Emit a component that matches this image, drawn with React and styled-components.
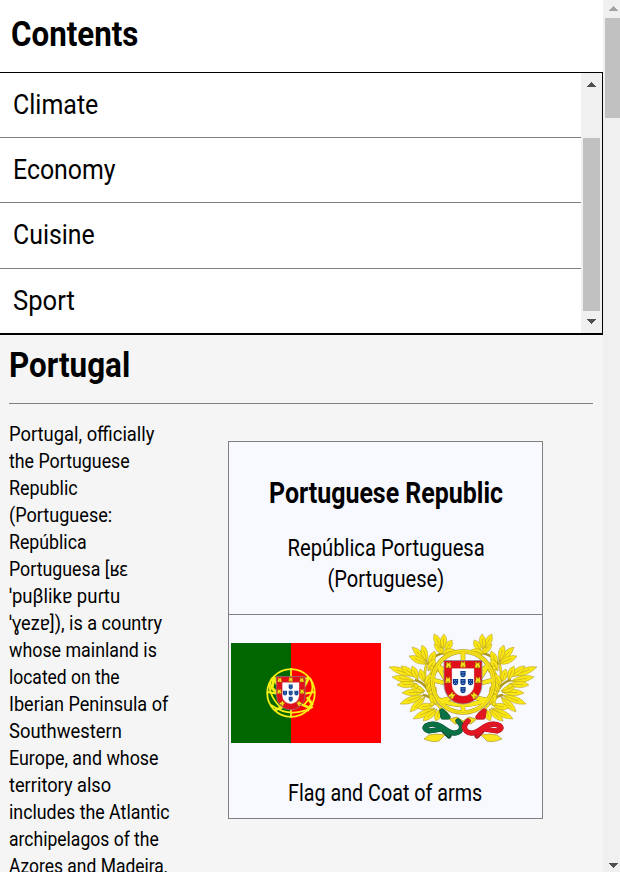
import React, { useLayoutEffect, useRef, useState } from 'react';
import styled, { createGlobalStyle } from 'styled-components';

const GlobalStyle = createGlobalStyle`
  * { box-sizing: border-box; }
  html, body { margin: 0; padding: 0; overflow: hidden; }
  body {
    background: #f5f5f5;
    color: #000;
    font-family: Roboto, "Noto Sans", "DejaVu Sans", sans-serif;
  }
  h1, h2, p, ul { margin: 0; padding: 0; }
`;

const Page = styled.div`
  display: flex;
  width: 620px;
  height: 872px;
  overflow: hidden;
`;

const Column = styled.div`
  display: flex;
  flex-direction: column;
  width: 603px;
  flex: none;
`;

const Heading = styled.h1`
  font-size: 35px;
  line-height: 44px;
  font-weight: 700;
  white-space: nowrap;
`;

const ContentsHeader = styled.header`
  height: 72px;
  flex: none;
  padding: 13px 0 0 11px;
  background: #fff;
`;

const ContentsBox = styled.nav`
  display: flex;
  height: 263px;
  flex: none;
  border: 1px solid #000;
  border-left: 0;
  border-bottom-width: 2px;
  background: #fff;
`;

const ContentsList = styled.ul`
  flex: 1;
  list-style: none;
`;

const ContentsItem = styled.li`
  height: ${(p) => p.$height}px;
  padding: 0 0 0 13px;
  border-bottom: ${(p) => (p.$last ? '0' : '1px solid #808080')};
  font-size: 28.5px;
  line-height: 63px;
  white-space: nowrap;
`;

const Track = styled.div`
  display: flex;
  flex-direction: column;
  flex: none;
  width: ${(p) => p.$width}px;
  padding: ${(p) => p.$pad};
  background: #f0f0f0;
`;

const Thumb = styled.div`
  height: ${(p) => p.$height}px;
  margin-top: ${(p) => p.$gap}px;
  margin-bottom: ${(p) => p.$after}px;
  margin-right: ${(p) => p.$inset}px;
  flex: none;
  background: #c1c1c1;
`;

const Arrow = styled.svg`
  display: block;
  flex: none;
  width: 9px;
  height: 5px;
  margin-left: 4px;
  fill: ${(p) => p.$color};
`;

const Article = styled.main`
  flex: 1;
  min-height: 0;
  padding: 9px 10px 0 9px;
`;

const TitleBar = styled.div`
  height: 60px;
  border-bottom: 1px solid #808080;
`;

const Body = styled.div`
  display: flex;
  align-items: flex-start;
  padding-top: 17px;
`;

const Intro = styled.p`
  width: 219px;
  flex: none;
  font-size: 20px;
  line-height: 27px;
`;

const Line = styled.span`
  display: block;
  height: 27px;
  white-space: nowrap;
`;

const Card = styled.aside`
  width: 315px;
  height: 378px;
  margin-top: 20px;
  flex: none;
  border: 1px solid #808080;
  background: #f8f8ff;
  text-align: center;
`;

const CardHead = styled.div`
  height: 173px;
  padding-top: 32px;
  padding-left: 1px;
  border-bottom: 1px solid #808080;
`;

const CardTitle = styled.h2`
  font-size: 29px;
  line-height: 38px;
  font-weight: 700;
`;

const CardText = styled.p`
  font-size: 24px;
  line-height: 31px;
  margin-top: ${(p) => p.$gap || 0}px;
`;

const Emblems = styled.div`
  display: flex;
  align-items: flex-start;
  padding: 17px 0 0 2px;
  gap: 7px;
`;

const Flag = styled.svg`
  display: block;
  width: 150px;
  height: 100px;
  margin-top: 11px;
`;

const Arms = styled.svg`
  display: block;
  width: 150px;
  height: 112px;
`;

const Fitted = styled.span`
  display: inline-block;
  white-space: nowrap;
  transform-origin: ${(p) => (p.$center ? 'center' : 'left')} center;
`;

/* Condenses its text horizontally to the given width. */
function Fit({ width, center, children }) {
  const ref = useRef(null);
  const [scale, setScale] = useState(1);
  useLayoutEffect(() => {
    setScale(width / ref.current.offsetWidth);
  }, [width]);
  return (
    <Fitted ref={ref} $center={center} style={{ transform: `scaleX(${scale})` }}>
      {children}
    </Fitted>
  );
}

function Up({ color }) {
  return (
    <Arrow $color={color} viewBox="0 0 9 5" shapeRendering="crispEdges">
      <path d="M4 0h1v1h1v1h1v1h1v1h1v1H0V4h1V3h1V2h1V1h1z" />
    </Arrow>
  );
}

function Down({ color }) {
  return (
    <Arrow $color={color} viewBox="0 0 9 5" shapeRendering="crispEdges">
      <path d="M0 0h9v1H8v1H7v1H6v1H5v1H4V4H3V3H2V2H1V1H0z" />
    </Arrow>
  );
}

const QUINAS = [[0, -8], [-7.5, 0], [0, 0], [7.5, 0], [0, 8]];
const CASTLES = [[-14.5, -17], [0, -17.6], [14.5, -17], [-15, -2], [15, -2], [-11, 13.5], [11, 13.5]];

/* Shield centred on the origin, about 38 by 44 units. */
function Shield() {
  return (
    <g>
      <path d="M-19-21.5H19V2.5a19 19.5 0 0 1-38 0z" fill="#e0101a" stroke="#8d8b9a" strokeWidth=".8" />
      <path d="M-11-13.5H11V3a11 11 0 0 1-22 0z" fill="#fff" stroke="#d5b5bd" strokeWidth=".5" />
      {QUINAS.map(([x, y]) => (
        <g key={`${x},${y}`} transform={`translate(${x} ${y})`}>
          <path d="M-2.6-3H2.6V.5a2.6 2.8 0 0 1-5.2 0z" fill="#063b91" />
          <path d="M-1.3-1.6h.8m1 0h.8M-.4 0h.8m-1.7 1.5h.8m1 0h.8" stroke="#fff" strokeWidth=".6" />
        </g>
      ))}
      {CASTLES.map(([x, y], i) => (
        <g key={i} transform={`translate(${x} ${y}) rotate(${i === 5 ? 40 : i === 6 ? -40 : 0})`}>
          <path d="M-2.5 2.8V.2h.5v-3h1.2v1h1.6v-1h1.2v3h.5v2.6z" fill="#f4e51b" stroke="#967a10" strokeWidth=".4" />
          <path d="M-.5 2.5V1h1v1.5z" fill="#8b7110" />
        </g>
      ))}
    </g>
  );
}

function PortugalFlag() {
  return (
    <Flag viewBox="0 0 150 100">
      <path d="M0 0h60v100H0z" fill="#060" />
      <path d="M60 0h90v100H60z" fill="#f00" />
      <g fill="none" stroke="#f7ef16" strokeWidth="1.8">
        <circle cx="60" cy="50" r="23.8" />
        <path d="M60 25v50M36 49q24 5 48 0M42 34q18 9 36 0M40 62q20 14 42 2M41 35q-7 14 9 30M79 35q7 12-6 27" />
        <path d="M42 34Q52 55 79 65M78 34Q67 60 44 67" strokeWidth="2.8" />
        <path d="M43 35l-2 10 6 6M76 54l5 7-5 7" strokeWidth="3" />
      </g>
      <g transform="translate(59.7 50) scale(.76 .77)"><Shield /></g>
    </Flag>
  );
}

/* Each leaf: base x, base y, tip x, tip y. */
const LEAVES = [
  [61, 29, 50, 19], [57, 23, 50, 9], [59, 24, 60, 9], [61, 26, 68, 15], [58, 29, 71, 25],
  [43, 37, 28, 22], [43, 36, 38, 20], [43, 39, 25, 31], [45, 40, 51, 26],
  [44, 46, 51, 34], [45, 52, 57, 38],
  [30, 51, 5, 42], [32, 52, 17, 41], [34, 55, 28, 41], [31, 56, 8, 52], [33, 59, 13, 60],
  [40, 57, 36, 44], [41, 61, 48, 48], [43, 67, 50, 55],
  [40, 67, 18, 68], [40, 70, 16, 79], [41, 72, 26, 87], [41, 66, 27, 62], [45, 73, 52, 62],
  [50, 80, 33, 83], [51, 83, 29, 94], [53, 84, 39, 96], [56, 84, 52, 96], [52, 80, 46, 69],
];

function leafPath([x, y, tx, ty]) {
  const dx = tx - x;
  const dy = ty - y;
  const length = Math.hypot(dx, dy);
  const nx = (-dy / length) * 6.5;
  const ny = (dx / length) * 6.5;
  return `M${x} ${y}Q${x + dx * 0.6 + nx} ${y + dy * 0.6 + ny} ${tx} ${ty}Q${x + dx * 0.5 - nx} ${y + dy * 0.5 - ny} ${x} ${y}M${x} ${y}L${x + dx * 0.7} ${y + dy * 0.7}`;
}

function Branch() {
  return (
    <g>
      <path d="M43 37Q39 48 43 63Q47 77 64 89M43 64Q39 57 31 55M49 76Q46 71 39 70M43 39Q48 31 59 28" fill="none" stroke="#ad981f" strokeWidth="2.4" />
      <path d="M43 37Q39 48 43 63Q47 77 64 89" fill="none" stroke="#f5e21c" strokeWidth="1.5" />
      <g fill="#fbe713" stroke="#a48f22" strokeWidth=".45">
        {LEAVES.map((leaf, i) => <path key={i} d={leafPath(leaf)} />)}
        <circle cx="48" cy="43" r="2.2" />
        <circle cx="32" cy="61" r="2.2" />
        <circle cx="48" cy="79" r="2" />
      </g>
    </g>
  );
}

const BANDS = 'M79 25v64M49 55q30 9 60 0M53 41q26 14 52 0M54 74q24 12 50 0M54 39Q63 69 103 75M104 39Q91 70 55 76';

const RIBBON = 'M58 86l6 6-5 0zM74 96Q80 101 76 106Q70 111 61 104Q50 96 42 101Q39 104 45 106L58 104';

function Ribbon({ color, shade }) {
  return (
    <g fill="none" strokeLinecap="round" strokeLinejoin="round">
      <path d={`${RIBBON}M60 106L65 111`} stroke={shade} strokeWidth="5.2" />
      <path d={RIBBON} stroke={color} strokeWidth="4.6" />
      <path d="M60 106L65 111" stroke={color} strokeWidth="2.6" />
    </g>
  );
}

function CoatOfArms() {
  return (
    <Arms viewBox="4 7 150 112">
      <Branch />
      <g transform="translate(158 0) scale(-1 1)"><Branch /></g>
      <g fill="none" stroke="#a58e1c" strokeWidth="4.6">
        <circle cx="79" cy="57" r="30.5" />
        <path d={BANDS} />
      </g>
      <g fill="none" stroke="#fae719" strokeWidth="3.6">
        <circle cx="79" cy="57" r="30.5" />
        <path d={BANDS} />
      </g>
      <circle cx="79" cy="57" r="30.5" fill="none" stroke="#b59d1c" strokeWidth=".4" />
      <g transform="translate(79 57)"><Shield /></g>
      <path d="M65 94l8-2 6 4 6-4 8 2-6 5-8-2-8 2z" fill="#f5dc1b" stroke="#927f1a" strokeWidth=".6" />
      <Ribbon color="#087044" shade="#12432d" />
      <g transform="translate(158 0) scale(-1 1)"><Ribbon color="#e11723" shade="#98131c" /></g>
      <g fill="#fbe31d" stroke="#917e1a" strokeWidth=".5">
        <path d="M61 110Q52 108 45 110L40 114Q49 118 55 116Q58 113 61 110z" />
        <path d="M97 110Q106 108 113 110L118 114Q109 118 103 116Q100 113 97 110z" />
      </g>
    </Arms>
  );
}

const ITEMS = [
  { label: 'Climate', width: 85, height: 65 },
  { label: 'Economy', width: 103, height: 65 },
  { label: 'Cuisine', width: 82, height: 66 },
  { label: 'Sport', width: 62, height: 64 },
];

const INTRO = [
  ['Portugal, officially', 145],
  ['the Portuguese', 121],
  ['Republic', 69],
  ['(Portuguese:', 103],
  ['República', 78],
  ['Portuguesa [ʁɛ', 119],
  ['ˈpuβlikɐ puɾtu', 111],
  ['ˈɣezɐ]), is a country', 153],
  ['whose mainland is', 148],
  ['located on the', 111],
  ['Iberian Peninsula of', 159],
  ['Southwestern', 113],
  ['Europe, and whose', 150],
  ['territory also', 102],
  ['includes the Atlantic', 161],
  ['archipelagos of the', 150],
  ['Azores and Madeira,', 158],
];

export default function App() {
  return (
    <>
      <GlobalStyle />
      <Page>
        <Column>
          <ContentsHeader>
            <Heading><Fit width={127}>Contents</Fit></Heading>
          </ContentsHeader>
          <ContentsBox>
            <ContentsList>
              {ITEMS.map((item, i) => (
                <ContentsItem key={item.label} $height={item.height} $last={i === ITEMS.length - 1}>
                  <Fit width={item.width}>{item.label}</Fit>
                </ContentsItem>
              ))}
            </ContentsList>
            <Track $width={21} $pad="9px 0 0 2px">
              <Up color="#505050" />
              <Thumb $height={173} $gap={51} $after={8} $inset={2} />
              <Down color="#505050" />
            </Track>
          </ContentsBox>
          <Article>
            <TitleBar>
              <Heading><Fit width={121}>Portugal</Fit></Heading>
            </TitleBar>
            <Body>
              <Intro>
                {INTRO.map(([text, width]) => (
                  <Line key={text}><Fit width={width}>{text}</Fit></Line>
                ))}
              </Intro>
              <Card>
                <CardHead>
                  <CardTitle><Fit center width={234}>Portuguese Republic</Fit></CardTitle>
                  <CardText $gap={21}>
                    <Fit center width={197}>República Portuguesa</Fit>
                    <br />
                    <Fit center width={117}>(Portuguese)</Fit>
                  </CardText>
                </CardHead>
                <Emblems>
                  <PortugalFlag />
                  <CoatOfArms />
                </Emblems>
                <CardText $gap={34}><Fit center width={194}>Flag and Coat of arms</Fit></CardText>
              </Card>
            </Body>
          </Article>
        </Column>
        <Track $width={17} $pad="6px 0 0 2px">
          <Up color="#a3a3a3" />
          <Thumb $height={100} $gap={7} $after={745} $inset={0} />
          <Down color="#505050" />
        </Track>
      </Page>
    </>
  );
}
